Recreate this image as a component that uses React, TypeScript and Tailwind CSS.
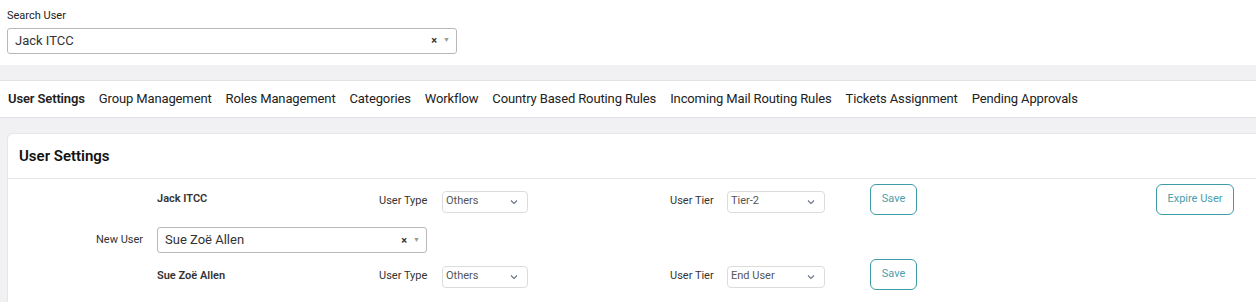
import React from "react";

function Chevron() {
  return (
    <svg width="10" height="10" viewBox="0 0 10 10" className="text-gray-500">
      <path d="M2 3.5 L5 6.5 L8 3.5" fill="none" stroke="currentColor" strokeWidth="1.1" />
    </svg>
  );
}

function ComboBox({ value, w }: { value: string; w: string }) {
  return (
    <div className={`flex h-[26px] items-center rounded-[3px] border border-[#b8b8b8] bg-white pl-[7px] pr-[6px] ${w}`}>
      <span className="flex-1 text-[13px] text-[#333]">{value}</span>
      <span className="text-[11px] font-bold leading-none text-[#333]">×</span>
      <span className="ml-[6px] text-[7px] leading-none text-[#999]">▼</span>
    </div>
  );
}

function SmallSelect({ value, w }: { value: string; w: string }) {
  return (
    <div className={`flex h-[22px] items-center justify-between rounded-[4px] border border-[#dcdcdc] bg-white pl-[3px] pr-[8px] ${w}`}>
      <span className="text-[11px] text-[#555]">{value}</span>
      <Chevron />
    </div>
  );
}

function OutlineBtn({ label, w }: { label: string; w: string }) {
  return (
    <div className={`flex h-[31px] items-center justify-center rounded-[6px] border border-[#3d9ca6] text-[11px] text-[#4a9eab] ${w}`}>
      {label}
    </div>
  );
}

function UserRow({ name, type, tier, expire, shift }: { name: string; type: string; tier: string; expire?: boolean; shift: string }) {
  return (
    <div className="flex h-[31px] items-center">
      <div className="w-[149px]" />
      <div className={`w-[222px] text-[11px] font-semibold text-[#333] ${shift}`}>{name}</div>
      <div className="mt-[4px] flex items-center">
        <div className="w-[63px] text-[11px] text-[#333]">User Type</div>
        <SmallSelect value={type} w="w-[86px]" />
        <div className="w-[142px]" />
        <div className="w-[57px] text-[11px] text-[#333]">User Tier</div>
        <SmallSelect value={tier} w="w-[98px]" />
      </div>
      <div className="w-[45px]" />
      <OutlineBtn label="Save" w="w-[47px]" />
      {expire && (
        <>
          <div className="w-[239px]" />
          <OutlineBtn label="Expire User" w="w-[78px]" />
        </>
      )}
    </div>
  );
}

export default function App() {
  const tabs = [
    "Group Management",
    "Roles Management",
    "Categories",
    "Workflow",
    "Country Based Routing Rules",
    "Incoming Mail Routing Rules",
    "Tickets Assignment",
    "Pending Approvals",
  ];
  return (
    <div className="h-[302px] w-[1256px] overflow-hidden bg-[#f1f1f4] font-['Roboto',sans-serif] text-[#222]">
      <div className="h-[65px] bg-white px-[7px] pt-[8px]">
        <div className="mb-[3px] text-[11px] text-[#222]">Search User</div>
        <ComboBox value="Jack ITCC" w="w-[450px]" />
      </div>
      <div className="h-[15px]" />
      <div className="flex h-[38px] items-center gap-[14px] border-y border-[#e2e2e6] bg-white px-[8px] text-[13px] tracking-[-0.13px] text-[#222]">
        <span className="font-semibold">User Settings</span>
        {tabs.map((t) => (
          <span key={t}>{t}</span>
        ))}
      </div>
      <div className="h-[15px]" />
      <div className="ml-[7px] mr-[-10px] h-[200px] rounded-tl-[6px] border border-[#e6e6ea] bg-white">
        <div className="flex h-[45px] items-center border-b border-[#e6e6ea] px-[11px] pt-[1px] text-[15px] font-semibold text-[#111]">
          User Settings
        </div>
        <div className="pt-[5px]">
          <UserRow name="Jack ITCC" type="Others" tier="Tier-2" expire shift="" />
          <div className="mt-[12px] flex h-[26px] items-center">
            <div className="w-[149px] pr-[14px] text-right text-[11px] text-[#333]">New User</div>
            <ComboBox value="Sue Zoë Allen" w="w-[270px]" />
          </div>
          <div className="mt-[6px]">
            <UserRow name="Sue Zoë Allen" type="Others" tier="End User" shift="mt-[3px]" />
          </div>
        </div>
      </div>
    </div>
  );
}
